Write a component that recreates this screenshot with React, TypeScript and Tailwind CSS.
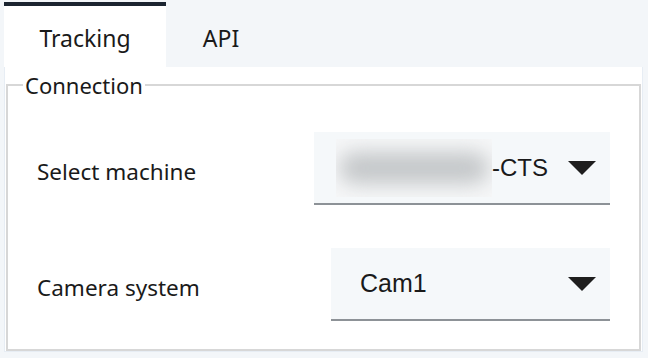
import React from "react";

function Arrow() {
  return (
    <svg width="28" height="14" viewBox="0 0 28 14" className="shrink-0">
      <polygon points="0,0 28,0 14,14" fill="#1e1e1e" />
    </svg>
  );
}

const valueFont = { fontFamily: '"Liberation Sans", Arial, sans-serif' };

export default function App() {
  return (
    <div
      className="w-[648px] h-[358px] bg-[#f3f6f9] text-[#1a1a1a] overflow-hidden"
      style={{ fontFamily: '"Noto Sans", "Open Sans", sans-serif' }}
    >
      {/* tabs */}
      <div className="flex h-[67px] pl-[4px] pt-[2px]">
        <div className="w-[162px] bg-white border-t-[4px] border-[#1b2430] flex items-start justify-center pt-[16px] text-[23px] leading-[32px]">
          Tracking
        </div>
        <div className="w-[110px] flex items-start justify-center pt-[20px] text-[23px] leading-[32px]">
          API
        </div>
      </div>

      {/* panel */}
      <div className="ml-[4px] w-[639px] h-[285px] bg-white border border-t-0 border-[#e7edf4] pt-[4px]">
        <fieldset className="mx-[1px] h-[280px] border-2 border-[#d7d7d7]">
          <legend className="ml-[15px] px-[2px] text-[22px] leading-[28px]">Connection</legend>

          <div className="px-[29px]">
            <div className="mt-[33px] flex items-center justify-between">
              <span className="text-[22.5px] pt-[6px]">Select machine</span>
              <div className="w-[296px] h-[73px] bg-[#f5f8fa] border-b-2 border-[#8d9297] flex items-center pl-[22px] pr-[14px]">
                <div className="w-[156px] h-[58px] bg-[#f6f7f8] overflow-hidden flex items-center justify-center">
                  <div className="w-[150px] h-[32px] rounded-full bg-[#c4c7c9] blur-[10px]" />
                </div>
                <span className="text-[24px]" style={valueFont}>-CTS</span>
                <div className="flex-1" />
                <Arrow />
              </div>
            </div>

            <div className="mt-[43px] flex items-center justify-between">
              <span className="text-[22.5px] pt-[6px]">Camera system</span>
              <div className="w-[279px] h-[73px] bg-[#f5f8fa] border-b-2 border-[#8d9297] flex items-center pl-[29px] pr-[14px]">
                <span className="text-[25px]" style={valueFont}>Cam1</span>
                <div className="flex-1" />
                <Arrow />
              </div>
            </div>
          </div>
        </fieldset>
      </div>
    </div>
  );
}
